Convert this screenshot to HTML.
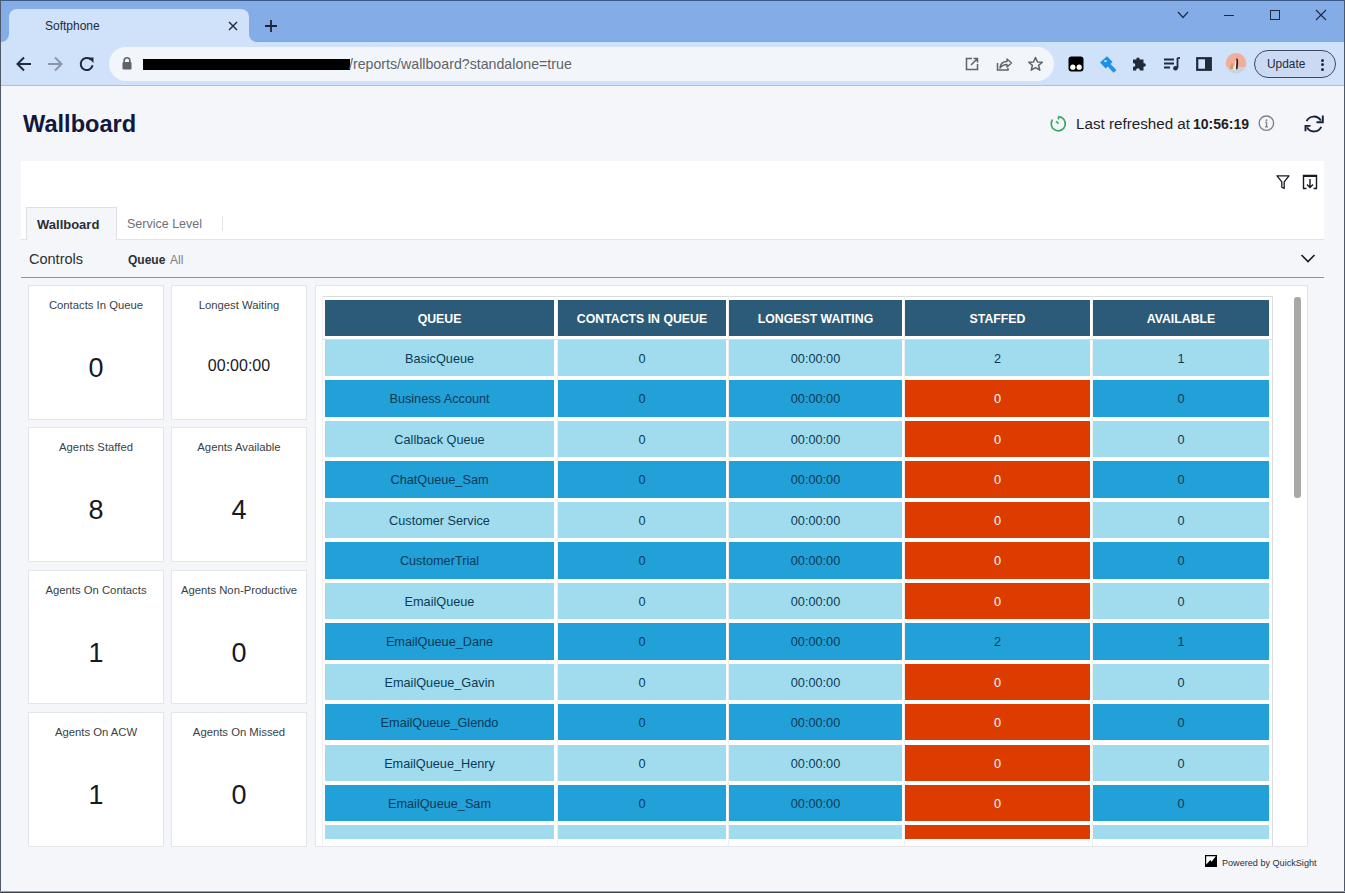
<!DOCTYPE html>
<html><head><meta charset="utf-8"><title>Wallboard</title><style>
*{box-sizing:border-box;margin:0;padding:0}
html,body{width:1345px;height:893px;overflow:hidden;font-family:"Liberation Sans",sans-serif;background:#f5f6fa}
.a{position:absolute}
.t{white-space:nowrap;line-height:1}
.kc{position:absolute;background:#fff;border:1px solid #e3e5e9}
.kl{position:absolute;left:0;right:0;text-align:center;font-size:11.3px;color:#3a3f45;white-space:nowrap;line-height:1}
.kv{position:absolute;left:0;right:0;text-align:center;font-size:27px;color:#16191f;white-space:nowrap;line-height:1}
.c{position:absolute;text-align:center;font-size:12.7px;color:#0b3a57;white-space:nowrap;line-height:1}
.h{position:absolute;text-align:center;font-size:12.3px;font-weight:bold;color:#fff;white-space:nowrap;line-height:1}
</style></head><body>
<div class="a" style="left:0;top:0;width:1345px;height:42px;background:#84ade8"></div>
<div class="a" style="left:0;top:0;width:1345px;height:1px;background:#3c5a86"></div>
<div class="a" style="left:9px;top:9px;width:240px;height:34px;background:#d0e1fa;border-radius:8px 8px 0 0"></div>
<div class="a" style="left:1px;top:34px;width:8px;height:8px;background:#d0e1fa"></div>
<div class="a" style="left:1px;top:34px;width:8px;height:8px;background:#84ade8;border-radius:0 0 8px 0"></div>
<div class="a" style="left:249px;top:34px;width:8px;height:8px;background:#d0e1fa"></div>
<div class="a" style="left:249px;top:34px;width:8px;height:8px;background:#84ade8;border-radius:0 0 0 8px"></div>
<div class="a" style="left:257px;top:41px;width:1088px;height:1px;background:#8ba7d6"></div>
<div class="a" style="left:0;top:42px;width:1345px;height:43px;background:#d0e1fa"></div>
<div class="a" style="left:0;top:85px;width:1345px;height:1px;background:#aebfd8"></div>
<div class="a t" style="left:45px;top:20px;font-size:12px;color:#1f2a3a">Softphone</div>
<svg class="a" style="left:227px;top:20px" width="12" height="12" viewBox="0 0 12 12"><path d="M2 2L10 10M10 2L2 10" stroke="#1f2a3a" stroke-width="1.4"/></svg>
<svg class="a" style="left:264px;top:19px" width="14" height="14" viewBox="0 0 14 14"><path d="M7 1V13M1 7H13" stroke="#1b2433" stroke-width="1.8"/></svg>
<svg class="a" style="left:1176px;top:10px" width="14" height="10" viewBox="0 0 14 10"><path d="M2 2L7 7.5L12 2" stroke="#1f2a40" stroke-width="1.2" fill="none"/></svg>
<div class="a" style="left:1224px;top:15px;width:10px;height:1px;background:#1f2a40"></div>
<div class="a" style="left:1270px;top:10px;width:10px;height:10px;border:1px solid #1f2a40"></div>
<svg class="a" style="left:1315px;top:9px" width="12" height="12" viewBox="0 0 12 12"><path d="M1 1L11 11M11 1L1 11" stroke="#1f2a40" stroke-width="1.1"/></svg>
<svg class="a" style="left:14.5px;top:55px" width="18" height="18" viewBox="0 0 18 18"><path d="M16 9H3M9 2.5L2.5 9L9 15.5" stroke="#1f2a3a" stroke-width="2" fill="none"/></svg>
<svg class="a" style="left:46px;top:55px" width="18" height="18" viewBox="0 0 18 18"><path d="M2 9H15M9 2.5L15.5 9L9 15.5" stroke="#8a96a8" stroke-width="2" fill="none"/></svg>
<svg class="a" style="left:78px;top:55px" width="18" height="18" viewBox="0 0 18 18"><path d="M14.6 10.2A6 6 0 1 1 12.8 4.6" stroke="#1f2a3a" stroke-width="2" fill="none"/><path d="M10 2.5H15.5V8Z" fill="#1f2a3a"/></svg>
<div class="a" style="left:109px;top:47px;width:945px;height:34px;background:#f2f6fb;border-radius:17px"></div>
<svg class="a" style="left:121px;top:56px" width="12" height="14" viewBox="0 0 12 14"><path d="M3.2 6.5V4.5A2.8 2.8 0 0 1 8.8 4.5V6.5" stroke="#5f6368" stroke-width="1.6" fill="none"/><rect x="1.5" y="6" width="9" height="7.5" rx="1" fill="#5f6368"/></svg>
<div class="a" style="left:143px;top:59px;width:207px;height:11px;background:#000"></div>
<div class="a t" style="left:349px;top:57px;font-size:14.2px;color:#5f6368">/reports/wallboard?standalone=true</div>
<svg class="a" style="left:964px;top:56px" width="16" height="16" viewBox="0 0 16 16"><path d="M8 2.5H2.5V13.5H13.5V8M9.5 2.5H13.5V6.5M13.5 2.5L7 9" stroke="#5f6368" stroke-width="1.5" fill="none"/></svg>
<svg class="a" style="left:996px;top:56px" width="17" height="16" viewBox="0 0 17 16"><path d="M1.5 7V14H12V12" stroke="#5f6368" stroke-width="1.5" fill="none"/><path d="M4 12C4.5 7.5 7.5 5.5 11 5.5V3L15.5 7L11 11V8.5C8 8.5 6 9.5 4 12Z" stroke="#5f6368" stroke-width="1.4" fill="none" stroke-linejoin="round"/></svg>
<svg class="a" style="left:1027px;top:56px" width="17" height="16" viewBox="0 0 17 16"><path d="M8.5 1.5L10.5 6L15.3 6.3L11.6 9.4L12.8 14.2L8.5 11.6L4.2 14.2L5.4 9.4L1.7 6.3L6.5 6Z" stroke="#5f6368" stroke-width="1.5" fill="none" stroke-linejoin="round"/></svg>
<svg class="a" style="left:1068px;top:56px" width="16" height="16" viewBox="0 0 16 16"><rect x="0.5" y="0.5" width="15" height="15" rx="3" fill="#000"/><circle cx="4.8" cy="11.2" r="2.6" fill="#fff"/><circle cx="11.2" cy="11.2" r="2.6" fill="#fff"/></svg>
<svg class="a" style="left:1099px;top:55px" width="18" height="18" viewBox="0 0 18 18"><path d="M1 7.5L8 1.3L13.5 6.9L6.7 13.5Z" fill="#1f8ee6"/><path d="M9 9L16 16.5" stroke="#2592e6" stroke-width="4"/><ellipse cx="6.5" cy="6.2" rx="1.6" ry="1.1" fill="#8fe0ff"/></svg>
<svg class="a" style="left:1132px;top:56px" width="16" height="16" viewBox="0 0 16 16"><path d="M6 1.5C7.2 1.5 7.8 2.4 7.6 3.5H11.5V7.3C12.7 7.1 13.8 7.7 13.8 9C13.8 10.3 12.7 10.9 11.5 10.7V14.5H7.8C8 13.3 7.3 12.3 6 12.3C4.7 12.3 4 13.3 4.2 14.5H1V10.8C2.3 11 3.3 10.3 3.3 9C3.3 7.7 2.3 7 1 7.2V3.5H4.4C4.2 2.4 4.8 1.5 6 1.5Z" fill="#1f2a3a"/></svg>
<svg class="a" style="left:1163px;top:56px" width="18" height="16" viewBox="0 0 18 16"><path d="M1 3.5H11M1 7.5H11M1 11.5H7" stroke="#1f2a3a" stroke-width="1.8"/><path d="M14.5 2V12" stroke="#1f2a3a" stroke-width="1.8"/><path d="M14.5 2H17" stroke="#1f2a3a" stroke-width="1.8"/><circle cx="12.5" cy="12.3" r="2.3" fill="#1f2a3a"/></svg>
<svg class="a" style="left:1196px;top:57px" width="16" height="14" viewBox="0 0 16 14"><rect x="1.2" y="1.2" width="13.6" height="11.6" stroke="#1f2a3a" stroke-width="2.2" fill="none"/><rect x="9" y="1" width="6" height="12" fill="#1f2a3a"/></svg>
<svg class="a" style="left:1225px;top:52px" width="22" height="22" viewBox="0 0 22 22"><defs><clipPath id="av"><circle cx="11" cy="11.2" r="10.3"/></clipPath><filter id="bl"><feGaussianBlur stdDeviation="0.5"/></filter></defs><g clip-path="url(#av)" filter="url(#bl)"><rect width="22" height="22" fill="#f1ae9c"/><rect x="0" y="15" width="22" height="8" fill="#c9d3dc"/><path d="M4 17L6.5 11L8.5 12L8 17Z" fill="#d99c70"/><path d="M8.5 18L10.5 9L11.5 8L11.5 18Z" fill="#f6f2f0"/><path d="M11 6.5L12.8 6.8L13.2 10L12.6 17L10.8 17.5L11.5 9Z" fill="#2e2422"/></g></svg>
<div class="a" style="left:1254px;top:50px;width:82px;height:28px;border:1px solid #3b4a63;border-radius:14px;background:#cbdaf2"></div>
<div class="a t" style="left:1267px;top:59px;font-size:11.9px;color:#1f2a3a">Update</div>
<div class="a" style="left:1321px;top:58.5px;width:3.2px;height:3.2px;border-radius:2px;background:#1f2a3a"></div>
<div class="a" style="left:1321px;top:63px;width:3.2px;height:3.2px;border-radius:2px;background:#1f2a3a"></div>
<div class="a" style="left:1321px;top:67.5px;width:3.2px;height:3.2px;border-radius:2px;background:#1f2a3a"></div>
<div class="a" style="left:0;top:0;width:1px;height:893px;background:#4d5868"></div>
<div class="a" style="left:1344px;top:0;width:1px;height:893px;background:#4d5868"></div>
<div class="a" style="left:0;top:891px;width:1345px;height:1px;background:#9aa0a8"></div>
<div class="a" style="left:0;top:892px;width:1345px;height:1px;background:#3a3f48"></div>
<div class="a t" style="left:23px;top:113px;font-size:23.6px;font-weight:bold;color:#10183c">Wallboard</div>
<svg class="a" style="left:1046px;top:112px" width="26" height="24" viewBox="0 0 26 24"><g stroke="#38a865" stroke-width="1.7" fill="none"><path d="M12.5 4.6A7.1 7.1 0 1 1 6.6 7.4"/><path d="M12.5 4.5V7.5"/><path d="M10 9.4L12.6 11.6"/></g></svg>
<div class="a t" style="left:1076px;top:116px;font-size:15.2px;color:#1d1f24;line-height:16px">Last refreshed at<span style="position:absolute;left:117px;top:0;font-size:14px;font-weight:bold">10:56:19</span></div>
<svg class="a" style="left:1254px;top:112px" width="26" height="26" viewBox="0 0 26 26"><circle cx="12.4" cy="11.2" r="7.2" stroke="#7d8186" stroke-width="1.4" fill="none"/><path d="M12.5 10V14.6M11 14.8H14M11.4 10H12.5" stroke="#7d8186" stroke-width="1.3"/><circle cx="12.5" cy="8.2" r="0.9" fill="#7d8186"/></svg>
<svg class="a" style="left:1298px;top:110px" width="32" height="28" viewBox="0 0 32 28"><g stroke="#16213b" stroke-width="1.9" fill="none"><path d="M8.6 11.2A8 8 0 0 1 22.8 10.6"/><path d="M24.8 5.6V12.2H18.5"/><path d="M23.2 16.8A8 8 0 0 1 9 17.4"/><path d="M7.5 21.3V15.9H12.5"/></g></svg>
<div class="a" style="left:21px;top:161px;width:1303px;height:79px;background:#fff"></div>
<svg class="a" style="left:1275.7px;top:175px" width="14" height="15" viewBox="0 0 14 15"><path d="M1 0.8H13L8.2 6.8V13.5L5.8 12.2V6.8Z" stroke="#16191f" stroke-width="1.3" fill="none" stroke-linejoin="round"/></svg>
<svg class="a" style="left:1302px;top:174px" width="16" height="16" viewBox="0 0 16 16"><path d="M4.5 14.5H1.5V1.5H14.5V14.5H11.5" stroke="#16191f" stroke-width="1.4" fill="none"/><path d="M1.5 2H14.5" stroke="#16191f" stroke-width="2"/><path d="M8 5V13.5M5 10.5L8 13.5L11 10.5" stroke="#16191f" stroke-width="1.4" fill="none"/></svg>
<div class="a" style="left:21px;top:239px;width:1303px;height:1px;background:#e1e4e8"></div>
<div class="a" style="left:26px;top:207px;width:91px;height:33px;background:#f5f6fa;border:1px solid #dcdfe3;border-bottom:none"></div>
<div class="a t" style="left:37px;top:218px;font-size:13px;font-weight:bold;color:#2a2f36">Wallboard</div>
<div class="a t" style="left:127px;top:218px;font-size:12.5px;color:#6b7079">Service Level</div>
<div class="a" style="left:222px;top:216px;width:1px;height:15px;background:#e3e5e9"></div>
<div class="a t" style="left:29px;top:252px;font-size:14.5px;color:#2a2f36">Controls</div>
<div class="a t" style="left:128px;top:254px;font-size:12px;font-weight:bold;color:#2a2f36">Queue</div>
<div class="a t" style="left:170px;top:254px;font-size:12px;color:#7a7f87">All</div>
<svg class="a" style="left:1300px;top:253px" width="16" height="11" viewBox="0 0 16 11"><path d="M1.5 2L8 8.5L14.5 2" stroke="#16191f" stroke-width="1.6" fill="none"/></svg>
<div class="a" style="left:21px;top:277px;width:1303px;height:1px;background:#8f9499"></div>
<div class="kc" style="left:28px;top:285px;width:136px;height:135px">
<div class="kl" style="top:14px">Contacts In Queue</div>
<div class="kv" style="top:68.5px">0</div>
</div>
<div class="kc" style="left:171px;top:285px;width:136px;height:135px">
<div class="kl" style="top:14px">Longest Waiting</div>
<div class="kv" style="top:71.5px;font-size:16px">00:00:00</div>
</div>
<div class="kc" style="left:28px;top:427px;width:136px;height:135px">
<div class="kl" style="top:14px">Agents Staffed</div>
<div class="kv" style="top:68.5px">8</div>
</div>
<div class="kc" style="left:171px;top:427px;width:136px;height:135px">
<div class="kl" style="top:14px">Agents Available</div>
<div class="kv" style="top:68.5px">4</div>
</div>
<div class="kc" style="left:28px;top:570px;width:136px;height:134px">
<div class="kl" style="top:14px">Agents On Contacts</div>
<div class="kv" style="top:68.5px">1</div>
</div>
<div class="kc" style="left:171px;top:570px;width:136px;height:134px">
<div class="kl" style="top:14px">Agents Non-Productive</div>
<div class="kv" style="top:68.5px">0</div>
</div>
<div class="kc" style="left:28px;top:712px;width:136px;height:135px">
<div class="kl" style="top:14px">Agents On ACW</div>
<div class="kv" style="top:68.5px">1</div>
</div>
<div class="kc" style="left:171px;top:712px;width:136px;height:135px">
<div class="kl" style="top:14px">Agents On Missed</div>
<div class="kv" style="top:68.5px">0</div>
</div>
<div class="a" style="left:315px;top:285px;width:993px;height:562px;background:#fff;border:1px solid #e3e5e9;overflow:hidden">
<div class="a" style="left:6px;top:10px;width:951px;height:1px;background:#d9dcdf"></div>
<div class="a" style="left:6px;top:53px;width:951px;height:1px;background:#d9dcdf"></div>
<div class="a" style="left:241px;top:10px;width:1px;height:560px;background:#eef0f2"></div>
<div class="a" style="left:412px;top:10px;width:1px;height:560px;background:#eef0f2"></div>
<div class="a" style="left:588px;top:10px;width:1px;height:560px;background:#eef0f2"></div>
<div class="a" style="left:776px;top:10px;width:1px;height:560px;background:#eef0f2"></div>
<div class="a" style="left:956px;top:10px;width:1px;height:560px;background:#d9dcdf"></div>
<div class="a" style="left:6px;top:10px;width:1px;height:560px;background:#eef0f2"></div>
<div class="a" style="left:9px;top:14px;width:229px;height:36px;background:#2c5b7a"></div>
<div class="h" style="left:9px;top:27px;width:229px">QUEUE</div>
<div class="a" style="left:242px;top:14px;width:168px;height:36px;background:#2c5b7a"></div>
<div class="h" style="left:242px;top:27px;width:168px">CONTACTS IN QUEUE</div>
<div class="a" style="left:413px;top:14px;width:173px;height:36px;background:#2c5b7a"></div>
<div class="h" style="left:413px;top:27px;width:173px">LONGEST WAITING</div>
<div class="a" style="left:589px;top:14px;width:185px;height:36px;background:#2c5b7a"></div>
<div class="h" style="left:589px;top:27px;width:185px">STAFFED</div>
<div class="a" style="left:777px;top:14px;width:176px;height:36px;background:#2c5b7a"></div>
<div class="h" style="left:777px;top:27px;width:176px">AVAILABLE</div>
<div class="a" style="left:0;top:0;width:991px;height:553px;overflow:hidden">
<div class="a" style="left:9px;top:54.00px;width:229px;height:36.45px;background:#a0dcee"></div>
<div class="c" style="left:9px;top:67.00px;width:229px;color:#0b3a57">BasicQueue</div>
<div class="a" style="left:242px;top:54.00px;width:168px;height:36.45px;background:#a0dcee"></div>
<div class="c" style="left:242px;top:67.00px;width:168px;color:#0b3a57">0</div>
<div class="a" style="left:413px;top:54.00px;width:173px;height:36.45px;background:#a0dcee"></div>
<div class="c" style="left:413px;top:67.00px;width:173px;color:#0b3a57">00:00:00</div>
<div class="a" style="left:589px;top:54.00px;width:185px;height:36.45px;background:#a0dcee"></div>
<div class="c" style="left:589px;top:67.00px;width:185px;color:#0b3a57">2</div>
<div class="a" style="left:777px;top:54.00px;width:176px;height:36.45px;background:#a0dcee"></div>
<div class="c" style="left:777px;top:67.00px;width:176px;color:#0b3a57">1</div>
<div class="a" style="left:9px;top:94.45px;width:229px;height:36.45px;background:#22a0d8"></div>
<div class="c" style="left:9px;top:107.45px;width:229px;color:#0b3a57">Business Account</div>
<div class="a" style="left:242px;top:94.45px;width:168px;height:36.45px;background:#22a0d8"></div>
<div class="c" style="left:242px;top:107.45px;width:168px;color:#0b3a57">0</div>
<div class="a" style="left:413px;top:94.45px;width:173px;height:36.45px;background:#22a0d8"></div>
<div class="c" style="left:413px;top:107.45px;width:173px;color:#0b3a57">00:00:00</div>
<div class="a" style="left:589px;top:94.45px;width:185px;height:36.45px;background:#dd3c00"></div>
<div class="c" style="left:589px;top:107.45px;width:185px;color:#fff">0</div>
<div class="a" style="left:777px;top:94.45px;width:176px;height:36.45px;background:#22a0d8"></div>
<div class="c" style="left:777px;top:107.45px;width:176px;color:#0b3a57">0</div>
<div class="a" style="left:9px;top:134.90px;width:229px;height:36.45px;background:#a0dcee"></div>
<div class="c" style="left:9px;top:147.90px;width:229px;color:#0b3a57">Callback Queue</div>
<div class="a" style="left:242px;top:134.90px;width:168px;height:36.45px;background:#a0dcee"></div>
<div class="c" style="left:242px;top:147.90px;width:168px;color:#0b3a57">0</div>
<div class="a" style="left:413px;top:134.90px;width:173px;height:36.45px;background:#a0dcee"></div>
<div class="c" style="left:413px;top:147.90px;width:173px;color:#0b3a57">00:00:00</div>
<div class="a" style="left:589px;top:134.90px;width:185px;height:36.45px;background:#dd3c00"></div>
<div class="c" style="left:589px;top:147.90px;width:185px;color:#fff">0</div>
<div class="a" style="left:777px;top:134.90px;width:176px;height:36.45px;background:#a0dcee"></div>
<div class="c" style="left:777px;top:147.90px;width:176px;color:#0b3a57">0</div>
<div class="a" style="left:9px;top:175.35px;width:229px;height:36.45px;background:#22a0d8"></div>
<div class="c" style="left:9px;top:188.35px;width:229px;color:#0b3a57">ChatQueue_Sam</div>
<div class="a" style="left:242px;top:175.35px;width:168px;height:36.45px;background:#22a0d8"></div>
<div class="c" style="left:242px;top:188.35px;width:168px;color:#0b3a57">0</div>
<div class="a" style="left:413px;top:175.35px;width:173px;height:36.45px;background:#22a0d8"></div>
<div class="c" style="left:413px;top:188.35px;width:173px;color:#0b3a57">00:00:00</div>
<div class="a" style="left:589px;top:175.35px;width:185px;height:36.45px;background:#dd3c00"></div>
<div class="c" style="left:589px;top:188.35px;width:185px;color:#fff">0</div>
<div class="a" style="left:777px;top:175.35px;width:176px;height:36.45px;background:#22a0d8"></div>
<div class="c" style="left:777px;top:188.35px;width:176px;color:#0b3a57">0</div>
<div class="a" style="left:9px;top:215.80px;width:229px;height:36.45px;background:#a0dcee"></div>
<div class="c" style="left:9px;top:228.80px;width:229px;color:#0b3a57">Customer Service</div>
<div class="a" style="left:242px;top:215.80px;width:168px;height:36.45px;background:#a0dcee"></div>
<div class="c" style="left:242px;top:228.80px;width:168px;color:#0b3a57">0</div>
<div class="a" style="left:413px;top:215.80px;width:173px;height:36.45px;background:#a0dcee"></div>
<div class="c" style="left:413px;top:228.80px;width:173px;color:#0b3a57">00:00:00</div>
<div class="a" style="left:589px;top:215.80px;width:185px;height:36.45px;background:#dd3c00"></div>
<div class="c" style="left:589px;top:228.80px;width:185px;color:#fff">0</div>
<div class="a" style="left:777px;top:215.80px;width:176px;height:36.45px;background:#a0dcee"></div>
<div class="c" style="left:777px;top:228.80px;width:176px;color:#0b3a57">0</div>
<div class="a" style="left:9px;top:256.25px;width:229px;height:36.45px;background:#22a0d8"></div>
<div class="c" style="left:9px;top:269.25px;width:229px;color:#0b3a57">CustomerTrial</div>
<div class="a" style="left:242px;top:256.25px;width:168px;height:36.45px;background:#22a0d8"></div>
<div class="c" style="left:242px;top:269.25px;width:168px;color:#0b3a57">0</div>
<div class="a" style="left:413px;top:256.25px;width:173px;height:36.45px;background:#22a0d8"></div>
<div class="c" style="left:413px;top:269.25px;width:173px;color:#0b3a57">00:00:00</div>
<div class="a" style="left:589px;top:256.25px;width:185px;height:36.45px;background:#dd3c00"></div>
<div class="c" style="left:589px;top:269.25px;width:185px;color:#fff">0</div>
<div class="a" style="left:777px;top:256.25px;width:176px;height:36.45px;background:#22a0d8"></div>
<div class="c" style="left:777px;top:269.25px;width:176px;color:#0b3a57">0</div>
<div class="a" style="left:9px;top:296.70px;width:229px;height:36.45px;background:#a0dcee"></div>
<div class="c" style="left:9px;top:309.70px;width:229px;color:#0b3a57">EmailQueue</div>
<div class="a" style="left:242px;top:296.70px;width:168px;height:36.45px;background:#a0dcee"></div>
<div class="c" style="left:242px;top:309.70px;width:168px;color:#0b3a57">0</div>
<div class="a" style="left:413px;top:296.70px;width:173px;height:36.45px;background:#a0dcee"></div>
<div class="c" style="left:413px;top:309.70px;width:173px;color:#0b3a57">00:00:00</div>
<div class="a" style="left:589px;top:296.70px;width:185px;height:36.45px;background:#dd3c00"></div>
<div class="c" style="left:589px;top:309.70px;width:185px;color:#fff">0</div>
<div class="a" style="left:777px;top:296.70px;width:176px;height:36.45px;background:#a0dcee"></div>
<div class="c" style="left:777px;top:309.70px;width:176px;color:#0b3a57">0</div>
<div class="a" style="left:9px;top:337.15px;width:229px;height:36.45px;background:#22a0d8"></div>
<div class="c" style="left:9px;top:350.15px;width:229px;color:#0b3a57">EmailQueue_Dane</div>
<div class="a" style="left:242px;top:337.15px;width:168px;height:36.45px;background:#22a0d8"></div>
<div class="c" style="left:242px;top:350.15px;width:168px;color:#0b3a57">0</div>
<div class="a" style="left:413px;top:337.15px;width:173px;height:36.45px;background:#22a0d8"></div>
<div class="c" style="left:413px;top:350.15px;width:173px;color:#0b3a57">00:00:00</div>
<div class="a" style="left:589px;top:337.15px;width:185px;height:36.45px;background:#22a0d8"></div>
<div class="c" style="left:589px;top:350.15px;width:185px;color:#0b3a57">2</div>
<div class="a" style="left:777px;top:337.15px;width:176px;height:36.45px;background:#22a0d8"></div>
<div class="c" style="left:777px;top:350.15px;width:176px;color:#0b3a57">1</div>
<div class="a" style="left:9px;top:377.60px;width:229px;height:36.45px;background:#a0dcee"></div>
<div class="c" style="left:9px;top:390.60px;width:229px;color:#0b3a57">EmailQueue_Gavin</div>
<div class="a" style="left:242px;top:377.60px;width:168px;height:36.45px;background:#a0dcee"></div>
<div class="c" style="left:242px;top:390.60px;width:168px;color:#0b3a57">0</div>
<div class="a" style="left:413px;top:377.60px;width:173px;height:36.45px;background:#a0dcee"></div>
<div class="c" style="left:413px;top:390.60px;width:173px;color:#0b3a57">00:00:00</div>
<div class="a" style="left:589px;top:377.60px;width:185px;height:36.45px;background:#dd3c00"></div>
<div class="c" style="left:589px;top:390.60px;width:185px;color:#fff">0</div>
<div class="a" style="left:777px;top:377.60px;width:176px;height:36.45px;background:#a0dcee"></div>
<div class="c" style="left:777px;top:390.60px;width:176px;color:#0b3a57">0</div>
<div class="a" style="left:9px;top:418.05px;width:229px;height:36.45px;background:#22a0d8"></div>
<div class="c" style="left:9px;top:431.05px;width:229px;color:#0b3a57">EmailQueue_Glendo</div>
<div class="a" style="left:242px;top:418.05px;width:168px;height:36.45px;background:#22a0d8"></div>
<div class="c" style="left:242px;top:431.05px;width:168px;color:#0b3a57">0</div>
<div class="a" style="left:413px;top:418.05px;width:173px;height:36.45px;background:#22a0d8"></div>
<div class="c" style="left:413px;top:431.05px;width:173px;color:#0b3a57">00:00:00</div>
<div class="a" style="left:589px;top:418.05px;width:185px;height:36.45px;background:#dd3c00"></div>
<div class="c" style="left:589px;top:431.05px;width:185px;color:#fff">0</div>
<div class="a" style="left:777px;top:418.05px;width:176px;height:36.45px;background:#22a0d8"></div>
<div class="c" style="left:777px;top:431.05px;width:176px;color:#0b3a57">0</div>
<div class="a" style="left:9px;top:458.50px;width:229px;height:36.45px;background:#a0dcee"></div>
<div class="c" style="left:9px;top:471.50px;width:229px;color:#0b3a57">EmailQueue_Henry</div>
<div class="a" style="left:242px;top:458.50px;width:168px;height:36.45px;background:#a0dcee"></div>
<div class="c" style="left:242px;top:471.50px;width:168px;color:#0b3a57">0</div>
<div class="a" style="left:413px;top:458.50px;width:173px;height:36.45px;background:#a0dcee"></div>
<div class="c" style="left:413px;top:471.50px;width:173px;color:#0b3a57">00:00:00</div>
<div class="a" style="left:589px;top:458.50px;width:185px;height:36.45px;background:#dd3c00"></div>
<div class="c" style="left:589px;top:471.50px;width:185px;color:#fff">0</div>
<div class="a" style="left:777px;top:458.50px;width:176px;height:36.45px;background:#a0dcee"></div>
<div class="c" style="left:777px;top:471.50px;width:176px;color:#0b3a57">0</div>
<div class="a" style="left:9px;top:498.95px;width:229px;height:36.45px;background:#22a0d8"></div>
<div class="c" style="left:9px;top:511.95px;width:229px;color:#0b3a57">EmailQueue_Sam</div>
<div class="a" style="left:242px;top:498.95px;width:168px;height:36.45px;background:#22a0d8"></div>
<div class="c" style="left:242px;top:511.95px;width:168px;color:#0b3a57">0</div>
<div class="a" style="left:413px;top:498.95px;width:173px;height:36.45px;background:#22a0d8"></div>
<div class="c" style="left:413px;top:511.95px;width:173px;color:#0b3a57">00:00:00</div>
<div class="a" style="left:589px;top:498.95px;width:185px;height:36.45px;background:#dd3c00"></div>
<div class="c" style="left:589px;top:511.95px;width:185px;color:#fff">0</div>
<div class="a" style="left:777px;top:498.95px;width:176px;height:36.45px;background:#22a0d8"></div>
<div class="c" style="left:777px;top:511.95px;width:176px;color:#0b3a57">0</div>
<div class="a" style="left:9px;top:539.40px;width:229px;height:36.45px;background:#a0dcee"></div>
<div class="c" style="left:9px;top:552.40px;width:229px;color:#0b3a57">EmailQueue_T</div>
<div class="a" style="left:242px;top:539.40px;width:168px;height:36.45px;background:#a0dcee"></div>
<div class="c" style="left:242px;top:552.40px;width:168px;color:#0b3a57">0</div>
<div class="a" style="left:413px;top:539.40px;width:173px;height:36.45px;background:#a0dcee"></div>
<div class="c" style="left:413px;top:552.40px;width:173px;color:#0b3a57">00:00:00</div>
<div class="a" style="left:589px;top:539.40px;width:185px;height:36.45px;background:#dd3c00"></div>
<div class="c" style="left:589px;top:552.40px;width:185px;color:#fff">0</div>
<div class="a" style="left:777px;top:539.40px;width:176px;height:36.45px;background:#a0dcee"></div>
<div class="c" style="left:777px;top:552.40px;width:176px;color:#0b3a57">0</div>
</div>
<div class="a" style="left:978px;top:11px;width:7px;height:201px;background:#a8a8a8;border-radius:3px"></div>
</div>
<svg class="a" style="left:1205px;top:855px" width="12" height="12" viewBox="0 0 12 12"><rect width="12" height="12" fill="#000"/><path d="M1.2 1.2H10.8L6.6 6.8L5.4 5L1.2 9.6Z" fill="#fff"/></svg>
<div class="a t" style="left:1222px;top:859px;font-size:9.1px;color:#2a2f36">Powered by QuickSight</div>
</body></html>
